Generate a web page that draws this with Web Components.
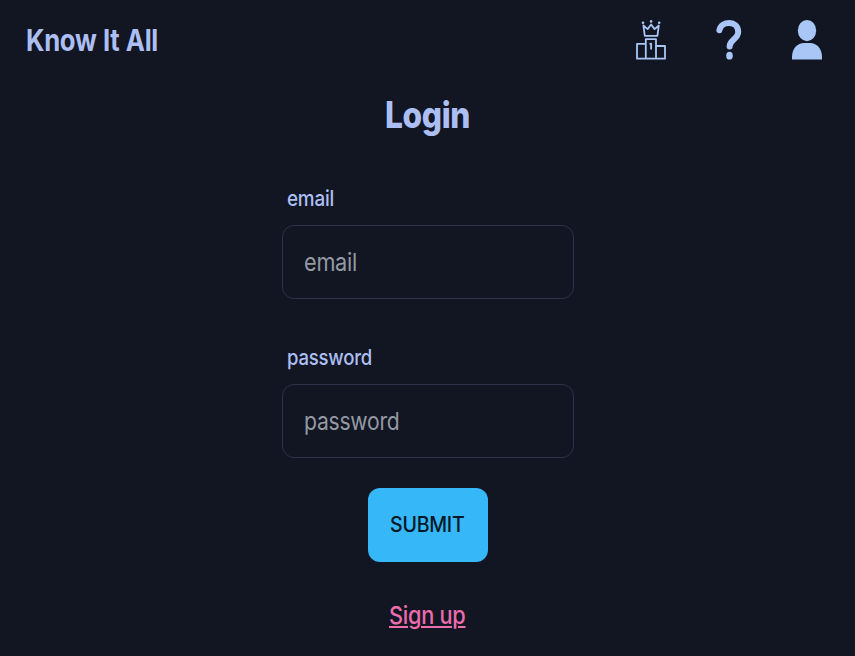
<!DOCTYPE html>
<html lang="en">
<head>
<meta charset="utf-8">
<title>Know It All</title>
<style>
html, body { margin: 0; height: 100%; overflow: hidden; background: #111622; }
body { font-family: Inter, "Liberation Sans", sans-serif; color: #adbff2; }
</style>
</head>
<body>
<quiz-app></quiz-app>
<script>
class FitText extends HTMLElement {
  connectedCallback() {
    const root = this.attachShadow({ mode: 'open' });
    root.innerHTML = `<style>
      :host { display: block; white-space: nowrap; letter-spacing: -.012em; }
      span { display: inline-block; transform-origin: 0 50%; text-decoration: var(--fit-decoration, none); text-decoration-thickness: 2px; text-underline-offset: 2px; }
      </style><span><slot></slot></span>`;
    const width = Number(this.getAttribute('width'));
    const span = root.querySelector('span');
    this.style.width = width + 'px';
    span.style.transform = `scaleX(${width / span.getBoundingClientRect().width})`;
  }
}

class NavIcon extends HTMLElement {
  connectedCallback() {
    const shapes = {
      podium: `<g fill="none" stroke="currentColor" stroke-width="1.8" stroke-linejoin="round">
        <path d="M11 58.700H2V43.800h9M21 46H30V58.700h-9M10.800 58.700V39.200h10.200v19.500z"/>
        <path d="M14.500 44l1.600-.4v6" />
        <path d="M9.800 35.800L8.400 25.500l4.200 3.600 3.500-4.600 3.500 4.600 4.200-3.600-1.400 10.300z"/></g>
        <g fill="currentColor"><circle cx="8" cy="22.700" r="1.300"/><circle cx="16.100" cy="21.400" r="1.300"/><circle cx="24.200" cy="22.700" r="1.300"/></g>`,
      help: `<path d="M6.400 30.300C8 20.800 25.200 19.800 25.200 32C25.200 39 16.600 40 16.600 46.400" fill="none" stroke="currentColor" stroke-width="6" stroke-linecap="round"/><ellipse cx="16.500" cy="55.700" rx="3.300" ry="3.900" fill="currentColor"/>`,
      user: `<ellipse cx="16" cy="30.600" rx="9.200" ry="10.600" fill="currentColor"/><path d="M1 59.500V57C1 48.500 6.500 43 13 43H19C25.500 43 31 48.500 31 57V59.500Z" fill="currentColor"/>`
    };
    this.attachShadow({ mode: 'open' }).innerHTML = `<style>
      :host { display: block; width: 32px; height: 80px; color: #a9c6f6; }
      svg { display: block; }
      </style><svg width="32" height="80" viewBox="0 0 32 80" aria-hidden="true">${shapes[this.getAttribute('name')]}</svg>`;
  }
}

class AppHeader extends HTMLElement {
  connectedCallback() {
    this.attachShadow({ mode: 'open' }).innerHTML = `<style>
      :host { display: flex; justify-content: space-between; height: 80px; padding: 0 32px 0 26px; box-sizing: border-box; }
      fit-text { font-size: 30px; line-height: 80px; font-weight: 650; word-spacing: .03em; }
      nav { display: flex; gap: 46px; }
      </style><fit-text width="132">Know It All</fit-text>
      <nav><nav-icon name="podium"></nav-icon><nav-icon name="help"></nav-icon><nav-icon name="user"></nav-icon></nav>`;
  }
}

class FormField extends HTMLElement {
  connectedCallback() {
    const name = this.getAttribute('name');
    this.attachShadow({ mode: 'open' }).innerHTML = `<style>
      :host { display: block; width: 292px; }
      .label { font-size: 21.600px; line-height: 30px; padding-left: 5px; font-weight: 500; }
      .box { margin-top: 12px; box-sizing: border-box; height: 73.600px; border: 1px solid #303048; border-radius: 12px; padding-left: 21px; }
      .box fit-text { font-size: 24.500px; line-height: 73px; color: #9499a3; }
      </style><fit-text class="label" width="${this.getAttribute('label-width')}">${name}</fit-text>
      <div class="box"><fit-text width="${this.getAttribute('hint-width')}">${name}</fit-text></div>`;
  }
}

class SubmitButton extends HTMLElement {
  connectedCallback() {
    this.attachShadow({ mode: 'open' }).innerHTML = `<style>
      :host { display: block; }
      button { display: flex; justify-content: center; align-items: center; width: 120px; height: 73.500px; padding: 0; border: 0; border-radius: 12px; background: #35b7f8; color: #071827; font: 550 21px/30px Inter, sans-serif; }
      </style><button type="button"><fit-text width="74.500"><slot></slot></fit-text></button>`;
  }
}

class QuizApp extends HTMLElement {
  connectedCallback() {
    this.attachShadow({ mode: 'open' }).innerHTML = `<style>
      :host { display: block; }
      main { display: flex; flex-direction: column; align-items: center; }
      h1 { margin: 10px 0 0; font-size: 37px; line-height: 50px; font-weight: 800; }
      .email { margin-top: 43px; }
      .password { margin-top: 43.800px; }
      submit-button { margin-top: 30.400px; }
      a { margin-top: 33px; font-size: 24.500px; line-height: 40px; font-weight: 450; color: #ec6cae; text-decoration: none; --fit-decoration: underline; }
      </style><app-header></app-header>
      <main>
        <h1><fit-text width="85">Login</fit-text></h1>
        <form-field class="email" name="email" label-width="47" hint-width="53"></form-field>
        <form-field class="password" name="password" label-width="85" hint-width="95.500"></form-field>
        <submit-button>SUBMIT</submit-button>
        <a href="#"><fit-text width="76.500">Sign up</fit-text></a>
      </main>`;
  }
}

customElements.define('fit-text', FitText);
customElements.define('nav-icon', NavIcon);
customElements.define('app-header', AppHeader);
customElements.define('form-field', FormField);
customElements.define('submit-button', SubmitButton);
customElements.define('quiz-app', QuizApp);
</script>
</body>
</html>
